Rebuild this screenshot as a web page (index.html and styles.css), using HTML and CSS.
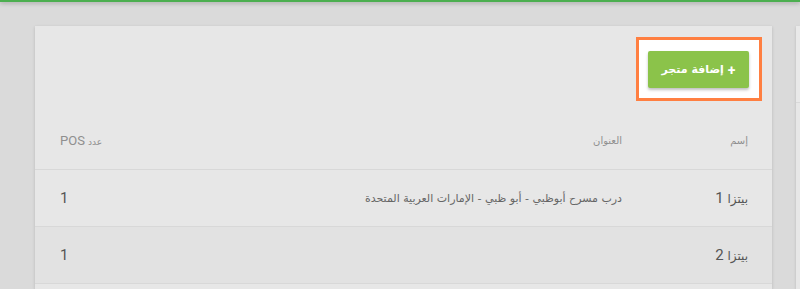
FILE: index.html
```html
<!DOCTYPE html>
<html lang="ar">
<head>
<meta charset="utf-8">
<link rel="stylesheet" href="styles.css">
</head>
<body>
<div class="topbar"></div>
<div class="page">
  <div class="card">
    <div class="card-head">
      <div class="highlight">
        <button class="btn-add" dir="rtl"><span class="plus">+</span> إضافة متجر</button>
      </div>
    </div>
    <div class="table" dir="rtl">
      <div class="row head">
        <div class="cell c-name">إسم</div>
        <div class="cell c-addr">العنوان</div>
        <div class="cell c-pos"><span class="ar-small">عدد</span> POS</div>
      </div>
      <div class="row">
        <div class="cell c-name"><span class="ar-name">بيتزا</span> 1</div>
        <div class="cell c-addr addr">درب مسرح أبوظبي - أبو ظبي - الإمارات العربية المتحدة</div>
        <div class="cell c-pos">1</div>
      </div>
      <div class="row alt">
        <div class="cell c-name"><span class="ar-name">بيتزا</span> 2</div>
        <div class="cell c-addr addr"></div>
        <div class="cell c-pos">1</div>
      </div>
    </div>
  </div>
  <div class="card side">
    <div class="side-head"></div>
  </div>
</div>
</body>
</html>
```

FILE: styles.css
```css
html, body {
  margin: 0;
  padding: 0;
}
* {
  box-sizing: border-box;
}
body {
  background: #dadada;
  font-family: Roboto, "DejaVu Sans", sans-serif;
  width: 800px;
  height: 289px;
  overflow: hidden;
}
.topbar {
  height: 2px;
  background: #4caf50;
  box-shadow: 0 1px 4px rgba(0, 0, 0, 0.35);
  position: relative;
  z-index: 2;
}
.page {
  display: flex;
  gap: 24px;
  padding: 24px 0 0 35px;
  width: 800px;
  height: 287px;
  overflow: hidden;
}
.card {
  flex: 0 0 737px;
  background: #e7e7e7;
  box-shadow: 0 1px 3px rgba(0, 0, 0, 0.16);
}
.card.side {
  flex: 1 1 auto;
  min-width: 0;
}
.side-head {
  height: 77px;
  border-bottom: 1px solid #d9d9d9;
  background: #e9e9e9;
}
.card-head {
  display: flex;
  justify-content: flex-end;
  padding: 25px 24px 25px 25px;
}
.highlight {
  margin: -14px -14px -14px 0;
  padding: 11px 10px 10px 9px;
  border: 3px solid #ff7f41;
  background: #ffffff;
  display: flex;
}
.btn-add {
  width: 101px;
  height: 37px;
  border: 0;
  border-radius: 2px;
  background: #8bc34a;
  color: #ffffff;
  font-family: "DejaVu Sans", Roboto, sans-serif;
  font-size: 11px;
  font-weight: bold;
  box-shadow: 0 2px 3px rgba(0, 0, 0, 0.25);
  padding: 0;
  display: flex;
  align-items: center;
  justify-content: center;
  gap: 4px;
}
.plus {
  font-family: Roboto, sans-serif;
  font-size: 14px;
}
.table {
  display: flex;
  flex-direction: column;
}
.row {
  display: grid;
  grid-template-columns: 126px 1fr auto;
  height: 57px;
  align-items: center;
  padding: 0 24px 0 25px;
  border-top: 1px solid #d8d8d8;
  color: #555555;
  font-size: 15px;
}
.row.head {
  border-top: 0;
  height: 57px;
  color: #8f8f8f;
  font-size: 13px;
}
.row.head .c-name,
.row.head .c-addr {
  font-family: "DejaVu Sans", sans-serif;
  font-size: 10px;
}
.row.alt {
  background: #e2e2e2;
  border-bottom: 1px solid #d8d8d8;
  height: 58px;
}
.c-name {
  text-align: right;
  font-family: Roboto, "DejaVu Sans", sans-serif;
}
.ar-name {
  font-family: "DejaVu Sans", sans-serif;
  font-size: 12px;
}
.c-addr {
  text-align: right;
}
.addr {
  font-family: "DejaVu Sans", sans-serif;
  font-size: 11px;
  color: #666666;
}
.c-pos {
  text-align: left;
}
.ar-small {
  font-family: "DejaVu Sans", sans-serif;
  font-size: 9px;
}
```
